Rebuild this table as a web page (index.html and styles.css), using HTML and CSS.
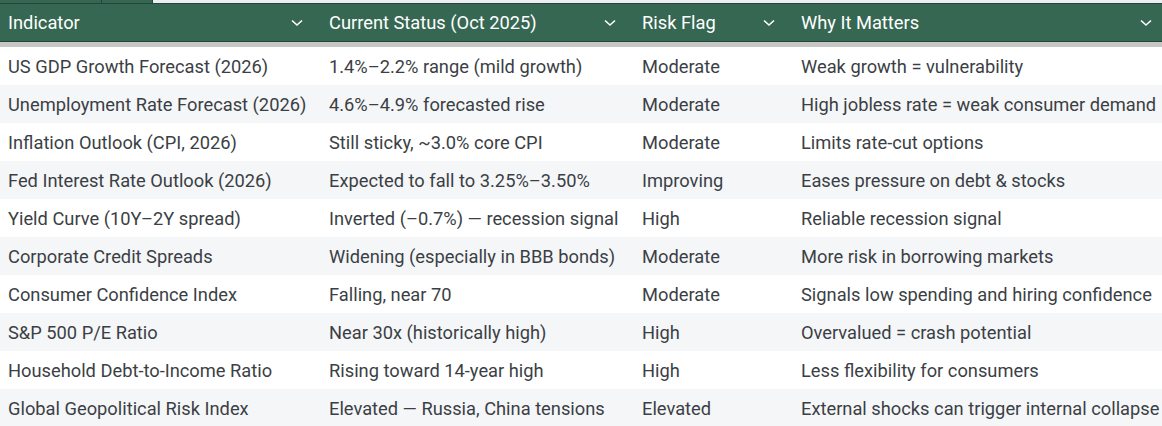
FILE: index.html
```html
<!DOCTYPE html>
<html>
<head>
<meta charset="utf-8">
<link rel="stylesheet" href="styles.css">
</head>
<body>
<div class="topbar">
  <div class="tcell t1"></div>
  <div class="tcell t2"></div>
  <div class="trest"></div>
</div>
<div class="table">
  <div class="hrow">
    <div class="hcell"><span>Indicator</span><svg class="chev" viewBox="0 0 12 8"><path d="M1 1.5 L6 6 L11 1.5"/></svg></div>
    <div class="hcell"><span>Current Status (Oct 2025)</span><svg class="chev" viewBox="0 0 12 8"><path d="M1 1.5 L6 6 L11 1.5"/></svg></div>
    <div class="hcell"><span>Risk Flag</span><svg class="chev" viewBox="0 0 12 8"><path d="M1 1.5 L6 6 L11 1.5"/></svg></div>
    <div class="hcell"><span>Why It Matters</span><svg class="chev" viewBox="0 0 12 8"><path d="M1 1.5 L6 6 L11 1.5"/></svg></div>
  </div>
  <div class="band"></div>
  <div class="row"><div>US GDP Growth Forecast (2026)</div><div>1.4%–2.2% range (mild growth)</div><div>Moderate</div><div>Weak growth = vulnerability</div></div>
  <div class="row alt"><div>Unemployment Rate Forecast (2026)</div><div>4.6%–4.9% forecasted rise</div><div>Moderate</div><div>High jobless rate = weak consumer demand</div></div>
  <div class="row"><div>Inflation Outlook (CPI, 2026)</div><div>Still sticky, ~3.0% core CPI</div><div>Moderate</div><div>Limits rate-cut options</div></div>
  <div class="row alt"><div>Fed Interest Rate Outlook (2026)</div><div>Expected to fall to 3.25%–3.50%</div><div>Improving</div><div>Eases pressure on debt &amp; stocks</div></div>
  <div class="row"><div>Yield Curve (10Y–2Y spread)</div><div>Inverted (–0.7%) — recession signal</div><div>High</div><div>Reliable recession signal</div></div>
  <div class="row alt"><div>Corporate Credit Spreads</div><div>Widening (especially in BBB bonds)</div><div>Moderate</div><div>More risk in borrowing markets</div></div>
  <div class="row"><div>Consumer Confidence Index</div><div>Falling, near 70</div><div>Moderate</div><div>Signals low spending and hiring confidence</div></div>
  <div class="row alt"><div>S&amp;P 500 P/E Ratio</div><div>Near 30x (historically high)</div><div>High</div><div>Overvalued = crash potential</div></div>
  <div class="row"><div>Household Debt-to-Income Ratio</div><div>Rising toward 14-year high</div><div>High</div><div>Less flexibility for consumers</div></div>
  <div class="row alt"><div>Global Geopolitical Risk Index</div><div>Elevated — Russia, China tensions</div><div>Elevated</div><div>External shocks can trigger internal collapse</div></div>
</div>
</body>
</html>
```
FILE: styles.css
```css
html, body {
  margin: 0;
  padding: 0;
  overflow: hidden;
  background: #ffffff;
}
body {
  width: 1162px;
  height: 426px;
  font-family: Roboto, "Noto Sans", sans-serif;
  font-size: 18.3px;
  color: #3b3f45;
}
.topbar {
  display: flex;
  height: 3px;
  border-bottom: 1px solid #24463a;
}
.tcell {
  background: #356752;
  border-right: 1px solid #24463a;
}
.t1 { width: 101px; }
.t2 { width: 50px; }
.trest {
  flex: 1;
  background: #eceef1;
}
.table {
  width: 1170px;
}
.hrow, .row {
  display: grid;
  grid-template-columns: 321px 313px 159px 377px;
}
.hrow {
  height: 37px;
  background: #356752;
  border-bottom: 1px solid #24463a;
  color: #ffffff;
}
.hcell {
  display: flex;
  align-items: center;
  justify-content: space-between;
  padding: 0 18px 0 8px;
}
.chev {
  width: 12px;
  height: 8px;
  fill: none;
  stroke: #ffffff;
  stroke-width: 1.6;
}
.band {
  height: 5px;
  background: #c6c6c6;
}
.row {
  height: 38px;
  background: #ffffff;
}
.row.alt {
  background: #f5f6f8;
}
.row > div {
  display: flex;
  align-items: center;
  padding-left: 8px;
  white-space: nowrap;
  overflow: hidden;
}
```
